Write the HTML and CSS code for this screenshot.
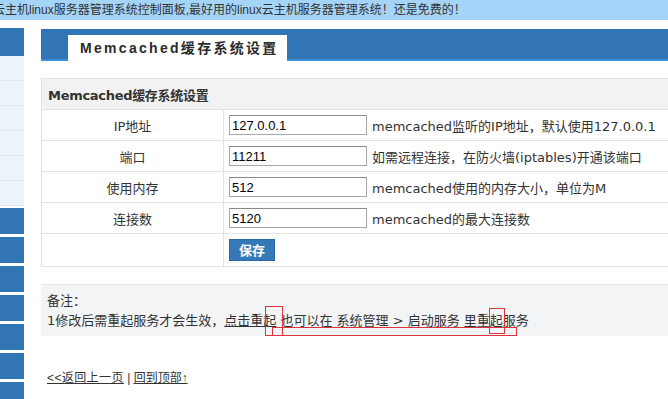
FILE: index.html
```html
<!DOCTYPE html>
<html lang="zh-CN">
<head>
  <meta charset="UTF-8">
  <meta name="viewport" content="width=device-width, initial-scale=1.0">
  <title>Memcached缓存系统设置</title>
  <link rel="stylesheet" href="styles.css">
</head>
<body>
  <div class="topbar">
    <span class="marquee">云主机linux服务器管理系统控制面板,最好用的linux云主机服务器管理系统！还是免费的！</span>
  </div>

  <div class="layout">
    <!-- left menu -->
    <aside class="sidebar">
      <div class="side-head"></div>
      <ul class="side-light">
        <li></li><li></li><li></li><li></li><li></li><li></li>
      </ul>
      <ul class="side-dark">
        <li></li><li></li><li></li><li></li><li></li><li></li><li></li>
      </ul>
    </aside>

    <main class="main">
      <div class="page-head">
        <span class="tab">Memcached缓存系统设置</span>
      </div>

      <form class="settings">
        <table class="form-table">
          <tr>
            <th colspan="2">Memcached缓存系统设置</th>
          </tr>
          <tr>
            <td class="label">IP地址</td>
            <td><div class="field"><input type="text" value="127.0.0.1"><span class="desc">memcached监听的IP地址，默认使用127.0.0.1</span></div></td>
          </tr>
          <tr>
            <td class="label">端口</td>
            <td><div class="field"><input type="text" value="11211"><span class="desc">如需远程连接，在防火墙(iptables)开通该端口</span></div></td>
          </tr>
          <tr>
            <td class="label">使用内存</td>
            <td><div class="field"><input type="text" value="512"><span class="desc">memcached使用的内存大小，单位为M</span></div></td>
          </tr>
          <tr>
            <td class="label">连接数</td>
            <td><div class="field"><input type="text" value="5120"><span class="desc">memcached的最大连接数</span></div></td>
          </tr>
          <tr class="save-row">
            <td></td>
            <td><button type="submit" class="btn-save">保存</button></td>
          </tr>
        </table>
      </form>

      <div class="note">
        <p>备注：</p>
        <p>1修改后需重起服务才会生效，<a href="#">点击重起</a> 也可以在 系统管理 &gt; 启动服务 里重起服务</p>
      </div>

      <div class="back-links">
        <a href="#">&lt;&lt;返回上一页</a> | <a href="#">回到顶部↑</a>
      </div>
    </main>
  </div>

  <!-- red annotation boxes drawn over the page -->
  <div class="mark mark-a"></div>
  <div class="mark mark-b"></div>
  <div class="mark mark-c"></div>
</body>
</html>
```

FILE: styles.css
```css
body {
  margin: 0;
  padding: 0;
  width: 668px;
  height: 399px;
  overflow: hidden;
  position: relative;
  font-family: "DejaVu Sans", "Noto Sans CJK SC", sans-serif;
  font-size: 13px;
  color: #333;
  background: #fff;
}

ul {
  list-style: none;
  margin: 0;
  padding: 0;
}

p {
  margin: 0;
}

a {
  color: #333;
}

.topbar {
  height: 20px;
  background: #a4d4f8;
  overflow: hidden;
  white-space: nowrap;
  font-family: "Liberation Sans", "Noto Sans CJK SC", sans-serif;
  font-size: 12px;
  line-height: 20px;
  color: #333;
}

.marquee {
  display: inline-block;
  margin-left: -7px;
}

.layout {
  display: flex;
  margin-top: 8px;
}

/* sidebar */
.sidebar {
  width: 24px;
  flex: none;
}

.side-head {
  height: 28px;
  background: #3275b4;
}

.side-light li {
  height: 24px;
  background: #edf3fa;
  border-bottom: 1px solid #dfe7f1;
}

.side-dark {
  padding-top: 2px;
}

.side-dark li {
  height: 26px;
  margin-bottom: 3px;
  background: #3275b4;
}

/* main area */
.main {
  margin-left: 17px;
  padding-top: 1px;
  width: 660px;
  flex: none;
}

.page-head {
  height: 30px;
  background: #3275b4;
  border-bottom: 2px solid #3f8fd6;
  display: flex;
  align-items: flex-end;
}

.tab {
  margin-left: 27px;
  margin-bottom: -2px;
  height: 26px;
  padding: 0 8px 0 12px;
  background: #fff;
  font-family: "Liberation Sans", "Noto Sans CJK SC", sans-serif;
  font-weight: bold;
  font-size: 14px;
  letter-spacing: 2.3px;
  line-height: 27px;
  color: #2b2b2b;
  white-space: nowrap;
}

.settings {
  margin: 17px 0 0;
}

.form-table {
  width: 100%;
  border-collapse: collapse;
}

.form-table th,
.form-table td {
  border: 1px solid #e3e3e3;
  border-right: none;
  padding: 0;
  height: 30px;
}

.form-table th {
  background: #f2f2f2;
  text-align: left;
  padding-left: 6px;
  font-weight: bold;
  font-size: 13px;
  letter-spacing: -0.3px;
  color: #333;
}

.form-table .label {
  width: 181px;
  text-align: center;
}

.field {
  display: flex;
  align-items: center;
  padding-left: 5px;
}

.field input {
  width: 132px;
  height: 16px;
  padding: 1px 2px;
  margin: 0;
  border: 1px solid #a8a8a8;
  border-top-color: #8a8a8a;
  font-family: "Liberation Sans", sans-serif;
  font-size: 13px;
  color: #000;
}

.desc {
  margin-left: 5px;
  white-space: nowrap;
}

.save-row td {
  height: 32px;
}

.btn-save {
  margin-left: 5px;
  width: 46px;
  height: 22px;
  padding: 0;
  background: #337ab7;
  border: 1px solid #2a69a2;
  color: #fff;
  font-family: "Noto Sans CJK SC", sans-serif;
  font-weight: bold;
  font-size: 13px;
  line-height: 20px;
  vertical-align: middle;
}

.note {
  margin-top: 17px;
  padding: 6px 6px 5px;
  background: #f3f4f5;
  border-top: 1px solid #e6e6e6;
  line-height: 20px;
}

.back-links {
  margin-top: 32px;
  padding-left: 6px;
  line-height: 20px;
  font-family: "Liberation Sans", "Noto Sans CJK SC", sans-serif;
  font-size: 12px;
}

.back-links a:first-child {
  letter-spacing: 0.4px;
}

/* annotation boxes */
.mark {
  position: absolute;
  border: 1px solid #e0323c;
}

.mark-a {
  left: 265px;
  top: 306px;
  width: 16px;
  height: 28px;
}

.mark-b {
  left: 272px;
  top: 327px;
  width: 243px;
  height: 7px;
}

.mark-c {
  left: 489px;
  top: 308px;
  width: 14px;
  height: 24px;
}
```
